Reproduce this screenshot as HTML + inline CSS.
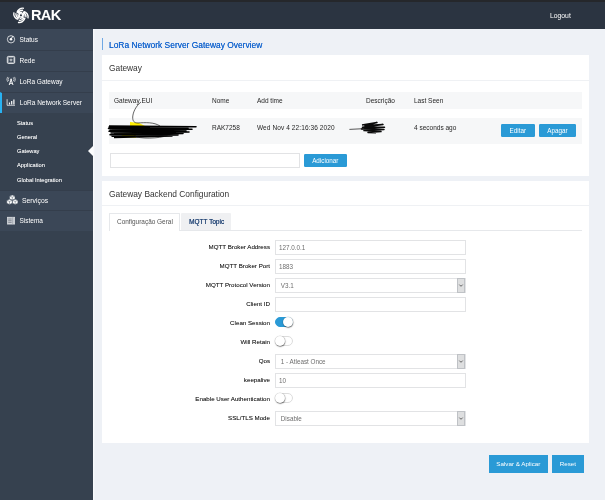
<!DOCTYPE html>
<html><head><meta charset="utf-8">
<style>
*{box-sizing:border-box;margin:0;padding:0}
html,body{width:605px;height:500px;overflow:hidden}
body{font-family:"Liberation Sans",sans-serif;background:#eef1f6;position:relative;color:#333}
.abs{position:absolute}
.t,.mi,.sub,.btn,.inp,.lbl{will-change:transform}
#header{left:0;top:0;width:605px;height:29px;background:#2b3441}
#topstrip{left:0;top:0;width:605px;height:1.6px;background:#25272b}
#sidebar{left:0;top:29px;width:93px;height:471px;background:#36414f}
.mi{position:absolute;left:0;width:93px;background:#3b4757;border-top:1px solid #343e4c;color:#fff;font-size:6.5px;padding-left:19.5px;white-space:nowrap}
.mi svg{position:absolute;left:0;top:0}
.sub{position:absolute;left:16.7px;text-shadow:0 0 0.3px rgba(255,255,255,.45);color:#fff;font-size:5.7px;white-space:nowrap;line-height:8px}
.t{position:absolute;white-space:nowrap;line-height:10px}
.tb{font-size:6.5px;color:#262626}
.card{position:absolute;background:#fff}
.btn{position:absolute;background:#2a9ad6;color:#fff;font-size:6.3px;text-align:center;border-radius:1.2px;white-space:nowrap}
.inp{position:absolute;left:275.3px;width:190.6px;height:15.2px;border:1px solid #e2e3e5;background:#fff;font-size:6.3px;color:#6e6e6e;line-height:14px;padding-left:3px;white-space:nowrap}
.lbl{position:absolute;width:170px;left:100px;text-align:right;margin-top:-0.5px;font-size:6.2px;line-height:8px;color:#262626;text-shadow:0 0 0.3px rgba(0,0,0,.45);white-space:nowrap}
.sel{position:absolute;left:457px;width:8px;height:15.2px;border:1px solid #bfc2c6;background:#dedfe0}
.sel svg{position:absolute;left:0;top:0}
.tg{position:absolute;left:274.5px;width:18.4px;margin-top:0.2px;height:10.8px;border-radius:5.5px;border:1px solid #dcdcdc;background:#fff}
.tg.on{background:#2a9ad6;border-color:#2a9ad6}
.tg i{position:absolute;top:-0.7px;left:-0.7px;width:10.4px;height:10.4px;border-radius:50%;background:#fff;box-shadow:0.3px 0.8px 1.2px rgba(0,0,0,.55),0 0 0 0.5px rgba(0,0,0,.12)}
.tg.on i{left:7.2px}
</style></head><body><div id="wrap" style="position:absolute;left:0;top:0;width:605px;height:500px;opacity:0.999">
<div id="header" class="abs"></div>
<div id="topstrip" class="abs"></div>
<svg class="abs" style="left:8px;top:4px" width="30" height="24" viewBox="8 4 30 24"><path d="M16.95 12.75A5.70 5.70 0 0 1 23.95 8.35M18.15 13.53A3.99 3.99 0 0 1 23.05 10.45M19.27 14.26A2.40 2.40 0 0 1 22.21 12.41M23.55 11.35A5.70 5.70 0 0 1 27.95 18.35M22.77 12.55A3.99 3.99 0 0 1 25.85 17.45M22.04 13.67A2.40 2.40 0 0 1 23.89 16.61M24.95 17.95A5.70 5.70 0 0 1 17.95 22.35M23.75 17.17A3.99 3.99 0 0 1 18.85 20.25M22.63 16.44A2.40 2.40 0 0 1 19.69 18.29M18.35 19.35A5.70 5.70 0 0 1 13.95 12.35M19.13 18.15A3.99 3.99 0 0 1 16.05 13.25M19.86 17.03A2.40 2.40 0 0 1 18.01 14.09" fill="none" stroke="#fff" stroke-width="1.4"/><circle cx="20.95" cy="15.35" r="1.7" fill="none" stroke="#fff" stroke-width="1.2"/></svg>
<div class="t" style="left:31.3px;top:5px;color:#fff;font-weight:bold;font-size:14.6px;letter-spacing:-0.7px;line-height:20px">RAK</div>
<div class="t" style="left:549.6px;top:11.2px;color:#fff;font-size:6.8px">Logout</div>
<div id="sidebar" class="abs">
 <div class="mi" style="top:0;height:21px;line-height:22.5px;border-top:none">Status</div>
 <div class="mi" style="top:21px;height:21px;line-height:20.8px">Rede</div>
 <div class="mi" style="top:42px;height:21px;line-height:20.8px">LoRa Gateway</div>
 <div class="mi" style="top:63px;height:21px;line-height:20px;border-left:2.5px solid #29b2f2;padding-left:17.8px">LoRa Network Server</div>
 <div class="sub" style="top:89.5px">Status</div>
 <div class="sub" style="top:103.8px">General</div>
 <div class="sub" style="top:118px">Gateway</div>
 <div class="sub" style="top:132.3px">Application</div>
 <div class="sub" style="top:146.5px">Global Integration</div>
 <div class="mi" style="top:161px;height:20px;line-height:19px;padding-left:22px;font-size:6.8px">Serviços</div>
 <div class="mi" style="top:181px;height:21px;line-height:20px">Sistema</div>
</div>
<svg class="abs" style="left:0;top:29px" width="24" height="210" viewBox="0 29 24 210" fill="none" stroke="#fff" stroke-width="0.9">
<circle cx="11" cy="39.3" r="3.65" stroke-width="0.8" opacity=".92"/><circle cx="11" cy="39.3" r="1.3" fill="#fff" stroke="none"/><path d="M11.3 38.6L12.9 36.2" stroke-width="1"/>
<rect x="7.3" y="56.4" width="7.4" height="7" rx="1.1" fill="rgba(255,255,255,0.38)" stroke-width="0.85"/><g fill="#3b4757" stroke="none"><circle cx="9.75" cy="58.6" r="0.95"/><circle cx="12.25" cy="58.6" r="0.95"/><circle cx="9.75" cy="61.2" r="0.95"/><circle cx="12.25" cy="61.2" r="0.95"/></g><circle cx="11" cy="59.9" r="0.75" fill="#fff" stroke="none"/>
<path d="M9.2 85L11.1 79.6L13 85M9.9 83.3h2.4" stroke-width="0.95"/><circle cx="11.1" cy="79.4" r="0.8" fill="#fff" stroke="none"/>
<path d="M8.9 77.4a3 3 0 0 0 0 3.8M7.6 76.9a4.6 4.6 0 0 0 0 4.9M13.3 77.4a3 3 0 0 1 0 3.8M14.6 76.9a4.6 4.6 0 0 1 0 4.9" stroke-width="0.7" opacity=".9"/>
<path d="M7.1 99.2V105.3H15" stroke-width="0.8" opacity=".9"/><path d="M9.5 104.6V102.4M11.7 104.6V101M13.9 104.6V99.6" stroke-width="1.2"/>
<g fill="#fff" stroke="#3b4757" stroke-width="0.45"><path d="M12.3 195L15 196.1V199L12.3 200.2L9.6 199V196.1Z"/><path d="M9.5 199.2L12.2 200.3V203.2L9.5 204.4L6.8 203.2V200.3Z"/><path d="M15.2 199.2L17.9 200.3V203.2L15.2 204.4L12.5 203.2V200.3Z"/><path d="M9.6 196.1L12.3 197.2L15 196.1M12.3 197.2V200M6.8 200.3L9.5 201.4L12.2 200.3M9.5 201.4V204.2M12.5 200.3L15.2 201.4L17.9 200.3M15.2 201.4V204.2" fill="none"/></g>
<rect x="7.4" y="217.2" width="7.3" height="6.9" fill="#c9cdd3" stroke="#e4e6ea" stroke-width="0.6"/><path d="M8.2 219h3.4M8.2 220.7h3.4M8.2 222.4h3.4" stroke="#59626f" stroke-width="0.6"/><path d="M12.6 217.4v6.5" stroke="#8a919b" stroke-width="0.5"/>
</svg>
<div class="abs" style="left:93px;top:29px;width:2px;height:471px;background:linear-gradient(90deg,#fbfcfd,#f3f5f9 60%,#eef1f6)"></div><div class="abs" style="left:88px;top:146.4px;width:0;height:0;border-right:5px solid #fbfcfd;border-top:5.5px solid transparent;border-bottom:5.5px solid transparent"></div>

<div class="abs" style="left:101.6px;top:38px;width:1.2px;height:12px;background:#6fa8e4"></div>
<div class="t" style="left:108.5px;top:39.6px;color:#1767cf;font-size:8.42px;text-shadow:0 0 0.3px #1767cf">LoRa Network Server Gateway Overview</div>

<div class="card" style="left:102px;top:54.6px;width:487.4px;height:121.8px"></div>
<div class="t" style="left:109.3px;top:63.2px;font-size:8.35px;color:#333">Gateway</div>
<div class="abs" style="left:102px;top:79.6px;width:487.4px;height:1px;background:#eff1f4"></div>
<div class="abs" style="left:109px;top:92.2px;width:473px;height:17.2px;background:#f6f7f8"></div>
<div class="abs" style="left:109px;top:118px;width:473px;height:25.8px;background:#f6f7f8"></div>
<div class="t tb" style="left:114.2px;top:96.1px">Gateway EUI</div>
<div class="t tb" style="left:211.7px;top:96.1px">Nome</div>
<div class="t tb" style="left:257px;top:96.1px">Add time</div>
<div class="t tb" style="left:366px;top:96.1px">Descrição</div>
<div class="t tb" style="left:413.6px;top:96.1px">Last Seen</div>
<div class="t tb" style="left:211.7px;top:123.2px">RAK7258</div>
<div class="t tb" style="left:257px;top:123.2px;letter-spacing:0.1px">Wed Nov 4 22:16:36 2020</div>
<div class="t tb" style="left:413.6px;top:123.2px">4 seconds ago</div>
<div class="btn" style="left:501.3px;top:123.6px;width:33.7px;height:13.2px;line-height:13.2px">Editar</div>
<div class="btn" style="left:538.9px;top:123.6px;width:37px;height:13.2px;line-height:13.2px">Apagar</div>
<div class="abs" style="left:109.8px;top:153.2px;width:190.6px;height:15px;border:1px solid #e2e3e5;background:#fff"></div>
<div class="btn" style="left:304.4px;top:154px;width:42.6px;height:13px;line-height:13.4px">Adicionar</div>

<svg class="abs" style="left:100px;top:95px" width="110" height="50" viewBox="100 95 110 50">
<path d="M130 122l9 1 8 4-17 0zM119 133.5l17 0 0 4.3-12-0.8z" fill="#ffee00"/>
<path d="M109 126L196 126.8L109 127.0L188 128.2L108.5 128.6L192 129.2L110 130.2L186 131.1L109 131.3L189 132.0L111 132.9L183 133.5L110 134.7L178 134.9L112 136.1L172 136.0L114 137.4" fill="none" stroke="#000" stroke-width="1.55" stroke-linejoin="round"/>
<path d="M112 128.5L180 129.5M110 131L176 132.5M114 134L168 134.5M120 127.5L150 127.8" fill="none" stroke="#000" stroke-width="1.6"/>
<path d="M141 102C136 106 133 112 132.7 117C132.6 121 134 123 138 123C145 122.5 154 122 160 126" fill="none" stroke="#111" stroke-width="0.65"/>
<path d="M134 135.5C139 139.5 160 138.5 167 135.5" fill="none" stroke="#111" stroke-width="0.6"/>
</svg>
<svg class="abs" style="left:345px;top:118px" width="45" height="20" viewBox="345 118 45 20">
<path d="M349.4 129.4L363 128.7" fill="none" stroke="#111" stroke-width="0.7"/>
<path d="M362 125L377 122.6L365 125.6L383 124.6L362.5 127.3L384.5 127.2L361.5 129L384 129.6L364 130.6L381 131.6L368 132.4L376 132.8" fill="none" stroke="#0a0a0a" stroke-width="1.5" stroke-linejoin="round"/>
</svg>

<div class="card" style="left:102px;top:180.6px;width:487.4px;height:262.2px"></div>
<div class="t" style="left:109.3px;top:188.5px;font-size:8.4px;color:#333">Gateway Backend Configuration</div>
<div class="abs" style="left:102px;top:204.8px;width:487.4px;height:1px;background:#eff1f4"></div>
<div class="abs" style="left:109px;top:229.6px;width:473px;height:1px;background:#e6e8eb"></div>
<div class="abs" style="left:109.2px;top:213.2px;width:70.8px;height:17.4px;border:1px solid #e6e8eb;border-bottom:none;background:#fff;border-radius:1px 1px 0 0"></div>
<div class="t" style="left:116.9px;top:217.1px;font-size:6.45px;color:#555">Configuração Geral</div>
<div class="abs" style="left:181px;top:213.4px;width:50px;height:16.2px;background:#eff0f2;border-radius:1px 1px 0 0"></div>
<div class="t" style="left:188.8px;top:217.1px;font-size:6.5px;color:#254777;text-shadow:0.15px 0 0 #254777">MQTT Topic</div>

<div class="lbl" style="top:243.2px">MQTT Broker Address</div><div class="inp" style="top:239.5px">127.0.0.1</div>
<div class="lbl" style="top:262.2px">MQTT Broker Port</div><div class="inp" style="top:258.5px">1883</div>
<div class="lbl" style="top:281.2px">MQTT Protocol Version</div><div class="inp" style="top:277.5px;padding-left:4.8px">V3.1</div><div class="sel" style="top:277.5px"><svg width="6" height="13" viewBox="0 0 6 13"><path d="M1.3 5.6L3 7.3L4.7 5.6" fill="none" stroke="#444" stroke-width="0.8"/></svg></div>
<div class="lbl" style="top:300.2px">Client ID</div><div class="inp" style="top:296.5px"></div>
<div class="lbl" style="top:319.2px">Clean Session</div><div class="tg on" style="top:316.4px"><i></i></div>
<div class="lbl" style="top:338.2px">Will Retain</div><div class="tg" style="top:335.5px"><i></i></div>
<div class="lbl" style="top:357.2px">Qos</div><div class="inp" style="top:353.5px;padding-left:4.8px">1 - Atleast Once</div><div class="sel" style="top:353.5px"><svg width="6" height="13" viewBox="0 0 6 13"><path d="M1.3 5.6L3 7.3L4.7 5.6" fill="none" stroke="#444" stroke-width="0.8"/></svg></div>
<div class="lbl" style="top:376.2px">keepalive</div><div class="inp" style="top:372.5px">10</div>
<div class="lbl" style="top:395.2px">Enable User Authentication</div><div class="tg" style="top:392.5px"><i></i></div>
<div class="lbl" style="top:414.2px">SSL/TLS Mode</div><div class="inp" style="top:410.5px;padding-left:4.8px">Disable</div><div class="sel" style="top:410.5px"><svg width="6" height="13" viewBox="0 0 6 13"><path d="M1.3 5.6L3 7.3L4.7 5.6" fill="none" stroke="#444" stroke-width="0.8"/></svg></div>

<div class="btn" style="left:488.5px;top:454.7px;width:58.7px;height:18.1px;line-height:18.1px;border-radius:0;font-size:6.25px">Salvar &amp; Aplicar</div>
<div class="btn" style="left:551.5px;top:454.7px;width:31.7px;height:18.1px;line-height:18.1px;border-radius:0;font-size:6.25px">Reset</div>
</div></body></html>
